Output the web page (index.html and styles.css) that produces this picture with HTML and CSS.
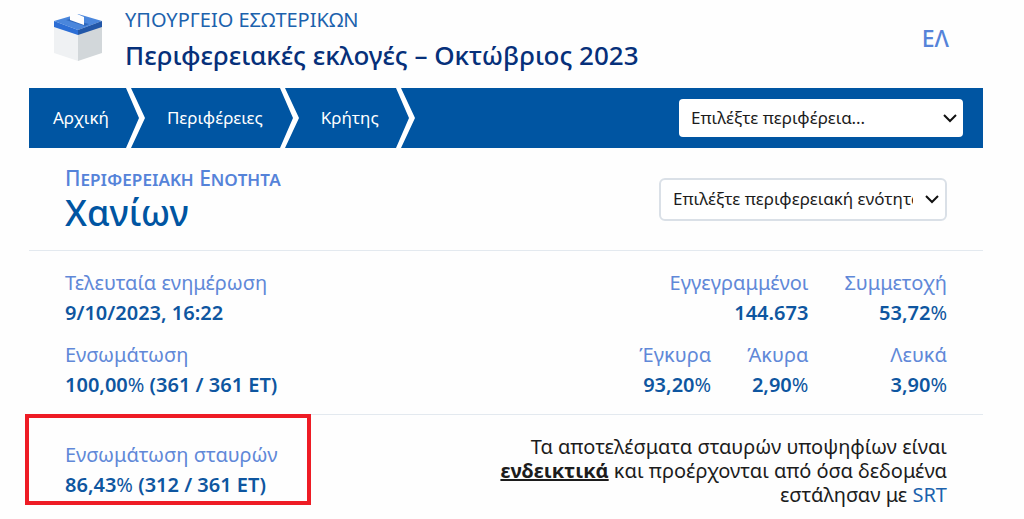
FILE: index.html
```html
<!DOCTYPE html>
<html lang="el">
<head>
    <meta charset="UTF-8">
    <meta name="viewport" content="width=device-width, initial-scale=1.0">
    <title>Περιφερειακές εκλογές – Οκτώβριος 2023</title>
    <link rel="stylesheet" href="styles.css">
</head>
<body>
    <div class="page">
        <header class="header">
            <svg class="logo" width="50" height="48" viewBox="0 0 50 48" aria-hidden="true">
                <polygon points="1,8 25,17 25,48 1,40" fill="#eff1f3"/>
                <polygon points="49,8 25,17 25,48 49,40" fill="#d2d7da"/>
                <polygon points="25,1 49,8 25,17 1,8" fill="#4a86dc"/>
                <polygon points="1,8 25,17 25,22 1,14" fill="#2c6ed5"/>
                <polygon points="49,8 25,17 25,22 49,14" fill="#2257a8"/>
                <polygon points="13,7 17,6 36,11 32,13" fill="#2f68bd"/>
                <polygon points="17,0 22,0 31,4 31,12 17,7" fill="#fefefe"/>
            </svg>
            <div class="titles">
                <p class="ministry">ΥΠΟΥΡΓΕΙΟ ΕΣΩΤΕΡΙΚΩΝ</p>
                <h1>Περιφερειακές εκλογές – Οκτώβριος 2023</h1>
            </div>
            <a class="lang" href="#">ΕΛ</a>
        </header>

        <nav class="nav">
            <a href="#">Αρχική</a>
            <svg class="chevron" viewBox="0 0 19 60" aria-hidden="true"><polygon points="0,0 5,0 19,30 5,60 0,60 13,30"/></svg>
            <a href="#">Περιφέρειες</a>
            <svg class="chevron" viewBox="0 0 19 60" aria-hidden="true"><polygon points="0,0 5,0 19,30 5,60 0,60 13,30"/></svg>
            <a href="#">Κρήτης</a>
            <svg class="chevron" viewBox="0 0 19 60" aria-hidden="true"><polygon points="0,0 5,0 19,30 5,60 0,60 13,30"/></svg>
            <div class="select region">
                <select aria-label="Περιφέρεια">
                    <option>Επιλέξτε περιφέρεια...</option>
                </select>
                <svg class="arrow" viewBox="0 0 14 9" aria-hidden="true"><path d="M1 1l6 6 6-6"/></svg>
            </div>
        </nav>

        <section class="row unit">
            <div>
                <p class="unit-type">Περιφερειακη Ενοτητα</p>
                <h2>Χανίων</h2>
            </div>
            <div class="select subregion">
                <select aria-label="Περιφερειακή ενότητα">
                    <option>Επιλέξτε περιφερειακή ενότητα...</option>
                </select>
                <svg class="arrow" viewBox="0 0 14 9" aria-hidden="true"><path d="M1 1l6 6 6-6"/></svg>
            </div>
        </section>

        <section class="row stats">
            <dl class="info">
                <div>
                    <dt>Τελευταία ενημέρωση</dt>
                    <dd>9/10/2023, 16:22</dd>
                </div>
                <div>
                    <dt>Ενσωμάτωση</dt>
                    <dd>100,00<span>%</span> (361 / 361 ET)</dd>
                </div>
            </dl>
            <dl class="numbers">
                <div class="wide">
                    <dt>Εγγεγραμμένοι</dt>
                    <dd>144.673</dd>
                </div>
                <div>
                    <dt>Συμμετοχή</dt>
                    <dd>53,72<span>%</span></dd>
                </div>
                <div>
                    <dt>Έγκυρα</dt>
                    <dd>93,20<span>%</span></dd>
                </div>
                <div>
                    <dt>Άκυρα</dt>
                    <dd>2,90<span>%</span></dd>
                </div>
                <div>
                    <dt>Λευκά</dt>
                    <dd>3,90<span>%</span></dd>
                </div>
            </dl>
        </section>

        <section class="row crosses">
            <dl class="info">
                <div>
                    <dt>Ενσωμάτωση σταυρών</dt>
                    <dd>86,43<span>%</span> (312 / 361 ET)</dd>
                </div>
            </dl>
            <p class="note">Τα αποτελέσματα σταυρών υποψηφίων είναι <strong>ενδεικτικά</strong> και προέρχονται από όσα δεδομένα εστάλησαν με <a href="#">SRT</a></p>
            <div class="highlight"></div>
        </section>
    </div>
</body>
</html>
```
FILE: styles.css
```css
* {
    box-sizing: border-box;
}
body {
    margin: 0;
    background: #fefefe;
    color: #1c1c1c;
    font-family: "Noto Sans", "Open Sans", sans-serif;
    font-size: 20px;
    line-height: 30px;
}
h1, h2, p, dl, dd {
    margin: 0;
}
a {
    text-decoration: none;
}
.page {
    margin: 0 41px 0 29px;
}

/* header */
.header {
    display: flex;
    align-items: flex-start;
    height: 88px;
    padding: 5px 34px 0 24px;
}
.logo {
    margin-top: 8px;
}
.titles {
    flex: 1;
    margin-left: 22px;
}
.ministry {
    color: #1c62ad;
}
h1 {
    color: #06307a;
    font-size: 26px;
    font-weight: 500;
    line-height: 40px;
}
.lang {
    color: #5583d9;
    font-size: 23px;
    font-weight: 500;
    line-height: 66px;
}

/* breadcrumb bar */
.nav {
    display: flex;
    align-items: center;
    height: 60px;
    padding: 0 20px 0 24px;
    background: #0055a2;
}
.nav a {
    margin-right: 17px;
    color: #fff;
    font-size: 17px;
}
.chevron {
    width: 19px;
    height: 60px;
    margin-right: 22px;
    fill: #fff;
}
.select {
    position: relative;
}
.select select {
    width: 100%;
    height: 100%;
    padding: 0 32px 0 12px;
    border: 0;
    border-radius: 4px;
    background: #fff;
    color: #1c1c1c;
    font: inherit;
    font-size: 17px;
    appearance: none;
}
.arrow {
    position: absolute;
    top: 50%;
    right: 6px;
    width: 14px;
    height: 9px;
    margin-top: -4px;
    fill: none;
    stroke: #111;
    stroke-width: 2;
    pointer-events: none;
}
.region {
    width: 284px;
    height: 38px;
    margin-left: auto;
}
.subregion {
    width: 288px;
    height: 43px;
}
.subregion select {
    border: 2px solid #dae0e7;
    border-radius: 6px;
}
.subregion .arrow {
    right: 8px;
}

/* content rows */
.row {
    display: flex;
    justify-content: space-between;
    padding: 0 36px;
}
.row + .row {
    border-top: 1px solid #e3e9ef;
}
.unit {
    align-items: center;
    height: 102px;
}
.unit-type {
    color: #5583d9;
    font-size: 21px;
    font-weight: 500;
    font-variant: small-caps;
    line-height: 28px;
}
h2 {
    color: #0055a2;
    font-size: 36px;
    font-weight: 500;
    line-height: 42px;
}
.stats {
    padding-top: 17px;
    padding-bottom: 14px;
}
.info, .numbers {
    display: grid;
    row-gap: 12px;
}
.numbers {
    grid-template-columns: auto auto auto;
    column-gap: 36px;
    text-align: right;
}
.wide {
    grid-column: span 2;
}
dt {
    color: #6088d8;
}
dd {
    color: #0e56a0;
    font-weight: 600;
}
dd span {
    font-weight: 400;
}
.crosses {
    position: relative;
    padding-top: 20px;
}
.crosses .info {
    padding-top: 5px;
}
.note {
    width: 460px;
    line-height: 24px;
    text-align: right;
}
.note strong {
    text-decoration: underline;
}
.note a {
    color: #1c62ad;
}
.highlight {
    position: absolute;
    top: -1px;
    left: -4px;
    width: 286px;
    height: 91px;
    border: 4px solid #ee1c25;
}
```
